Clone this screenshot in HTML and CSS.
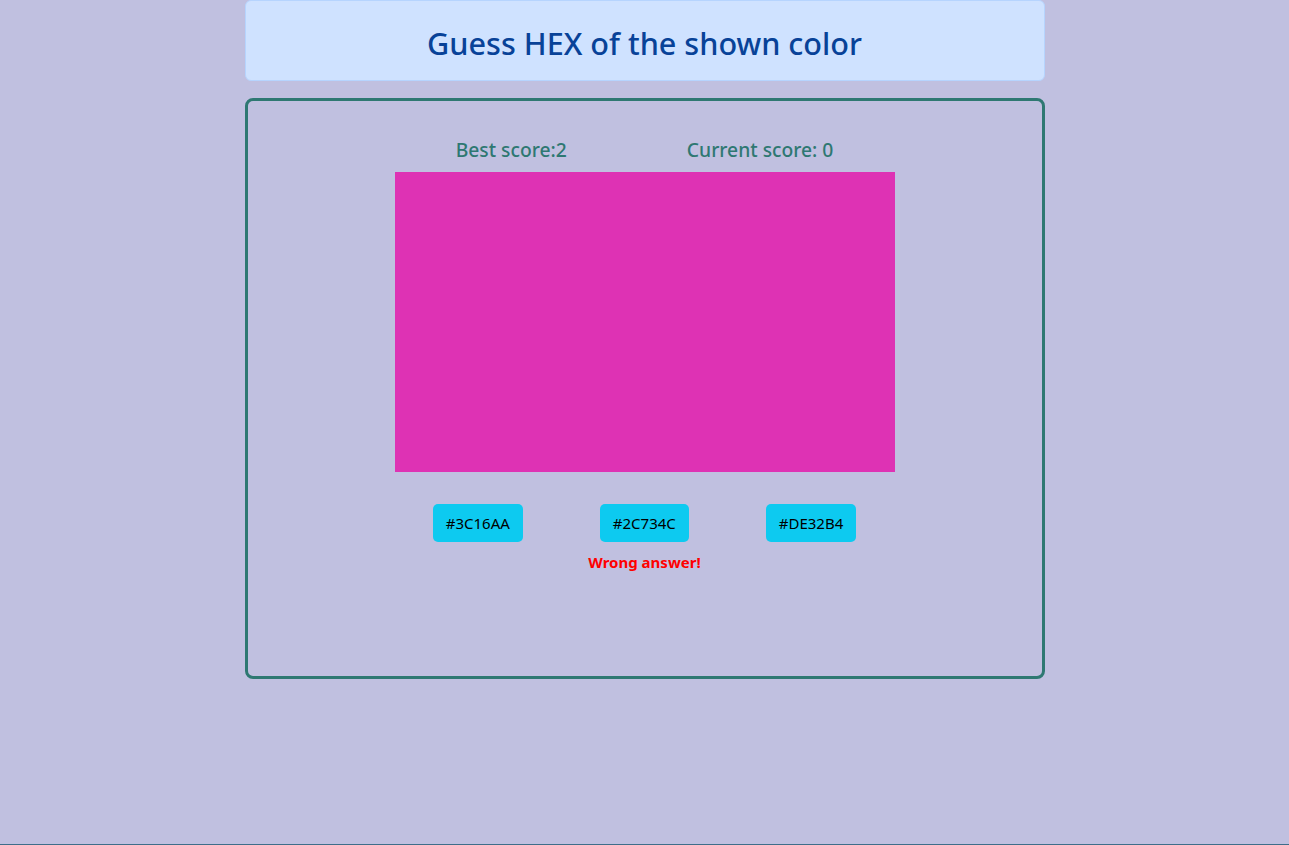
FILE: index.html
```html
<!DOCTYPE html>
<html lang="en">
<head>
<meta charset="utf-8">
<title>Guess HEX</title>
<link rel="stylesheet" href="styles.css">
</head>
<body>
<div class="page">
  <header class="title-bar">
    <h2 class="title">Guess HEX of the shown color</h2>
  </header>
  <main class="game">
    <div class="scores">
      <span class="score">Best score:2</span>
      <span class="score">Current score: 0</span>
    </div>
    <div class="swatch" style="background:#DE32B4"></div>
    <div class="options">
      <button class="option">#3C16AA</button>
      <button class="option">#2C734C</button>
      <button class="option">#DE32B4</button>
    </div>
    <p class="result">Wrong answer!</p>
  </main>
</div>
</body>
</html>
```
FILE: styles.css
```css
* { box-sizing: border-box; }
html {
  min-height: 100vh;
  background: #c0c0e0;
  border-bottom: 1px solid #3d6e8a;
}
body {
  margin: 0;
  font-family: "Noto Sans", "Open Sans", sans-serif;
  background: #c0c0e0;
}
.page {
  width: 800px;
  margin: 0 auto;
}
.title-bar {
  height: 81px;
  padding-top: 5px;
  background: #cfe2ff;
  border: 1px solid #b6d4fe;
  border-radius: 6px;
  display: flex;
  align-items: center;
  justify-content: center;
}
.title {
  margin: 0;
  font-size: 30.6px;
  font-weight: 500;
  color: #084298;
  line-height: 1.2;
}
.game {
  margin-top: 17px;
  height: 581px;
  border: 3px solid #2e7872;
  border-radius: 8px;
  padding-top: 37px;
  display: flex;
  flex-direction: column;
  align-items: center;
}
.scores {
  display: flex;
  gap: 120px;
  height: 24px;
  align-items: center;
}
.score {
  font-size: 19.3px;
  font-weight: 500;
  color: #2e7872;
  line-height: 24px;
}
.swatch {
  margin-top: 10px;
  width: 500px;
  height: 300px;
}
.options {
  margin-top: 32px;
  display: flex;
  gap: 77px;
}
.option {
  height: 38px;
  padding: 0 13px;
  border: none;
  border-radius: 5px;
  background: #0dcaf0;
  color: #000;
  font-family: "Noto Sans", "Open Sans", sans-serif;
  font-size: 15px;
}
.result {
  margin: 11px 0 0;
  font-size: 15px;
  font-weight: 700;
  color: #ff0000;
  line-height: 18px;
}
```
